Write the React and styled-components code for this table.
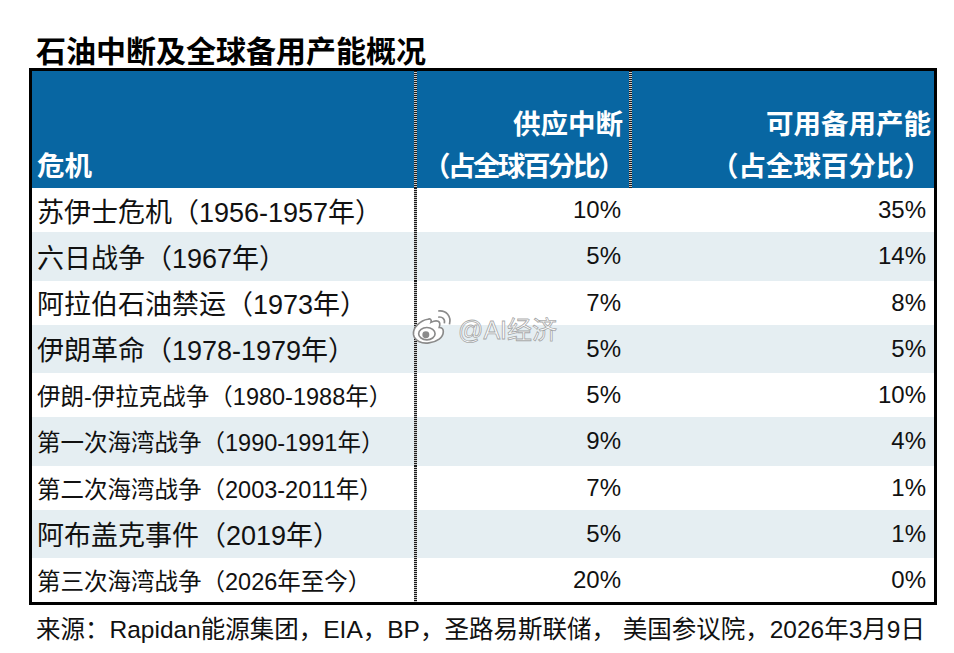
import React from "react";
import styled, { createGlobalStyle } from "styled-components";

const GlobalStyle = createGlobalStyle`
  html, body {
    margin: 0;
    padding: 0;
    background: #fff;
  }
  body {
    font-family: "Liberation Sans", "Noto Sans CJK SC", sans-serif;
    color: #111;
  }
`;

const FONT = `"Liberation Sans", "Noto Sans CJK SC", sans-serif`;

const dividerBg = `
  background-image: repeating-linear-gradient(
    to bottom,
    #1a1a1a 0 1px,
    #c8c8c8 1px 2px
  );
  background-size: 3px 100%;
  background-repeat: no-repeat;
  background-position: left top;
`;

const Page = styled.div`
  position: relative;
  width: 954px;
  height: 653px;
  padding: 31px 0 0 29px;
  box-sizing: border-box;
`;

const Title = styled.h1`
  margin: 0 0 0 7px;
  height: 37px;
  font-family: "Noto Sans CJK SC", sans-serif;
  font-size: 30px;
  font-weight: 700;
  line-height: 37px;
  color: #000;
`;

const Table = styled.div`
  width: 908px;
  border: 3px solid #000;
  box-sizing: border-box;
  display: grid;
  grid-template-columns: 382px 215px 1fr;
`;

const HeadCell = styled.div`
  height: 117px;
  background-color: #0866a2;
  color: #fff;
  font-family: "Noto Sans CJK SC", sans-serif;
  font-weight: 700;
  font-size: 27.5px;
  line-height: 42px;
  display: flex;
  flex-direction: column;
  justify-content: flex-end;
  align-items: ${(p) => (p.$right ? "flex-end" : "flex-start")};
  padding: 0 ${(p) => (p.$right ? p.$pr : 0)}px 3px ${(p) => (p.$right ? 0 : 5)}px;
  box-sizing: border-box;
  white-space: nowrap;
  ${(p) => p.$divider && dividerBg}
`;

const HeadSub = styled.span`
  letter-spacing: ${(p) => p.$tight || 0}px;
`;

const Cell = styled.div`
  height: ${(p) => p.$h}px;
  background-color: ${(p) => (p.$shade ? "#e5eef2" : "#fff")};
  display: flex;
  align-items: center;
  justify-content: ${(p) => (p.$right ? "flex-end" : "flex-start")};
  padding: ${(p) => (p.$right ? `0 ${p.$pr}px 0 0` : "0 0 0 5px")};
  box-sizing: border-box;
  font-family: ${FONT};
  font-size: ${(p) => p.$size}px;
  color: #111;
  white-space: nowrap;
  ${(p) => p.$divider && dividerBg}
`;

const Footer = styled.div`
  margin: 9px 0 0 7px;
  font-family: ${FONT};
  font-size: 24.5px;
  line-height: 32px;
  color: #111;
  white-space: nowrap;
`;

const Watermark = styled.div`
  position: absolute;
  left: 410px;
  top: 309px;
  display: flex;
  align-items: center;
  gap: 4px;
  font-family: ${FONT};
  font-size: 25px;
  color: rgba(255, 255, 255, 0.9);
  -webkit-text-stroke: 0.8px rgba(130, 130, 130, 0.7);
  pointer-events: none;
`;

const WeiboLogo = () => (
  <svg width="44" height="37" viewBox="0 0 42 36">
    <g fill="#fff" stroke="#8a8a8a" strokeWidth="1.6">
      <path d="M17 10c-7 1-15 8-14 15 1 6 8 9 15 8 8-1 14-5 14-11 0-3-2-4-4-4 1-3 1-5-1-6-2-1-5 0-7 1 1-3-1-4-3-3z" />
      <ellipse cx="16" cy="24" rx="8" ry="6" />
      <circle cx="15" cy="25" r="2.6" fill="#8a8a8a" />
      <path d="M27 8c4-1 7 2 6 6" fill="none" />
      <path d="M27 2c8-1 13 5 11 13" fill="none" />
    </g>
  </svg>
);

const rows = [
  { name: "苏伊士危机（1956-1957年）", a: "10%", b: "35%", size: 27 },
  { name: "六日战争（1967年）", a: "5%", b: "14%", size: 27 },
  { name: "阿拉伯石油禁运（1973年）", a: "7%", b: "8%", size: 27 },
  { name: "伊朗革命（1978-1979年）", a: "5%", b: "5%", size: 27 },
  { name: "伊朗-伊拉克战争（1980-1988年）", a: "5%", b: "10%", size: 23.5 },
  { name: "第一次海湾战争（1990-1991年）", a: "9%", b: "4%", size: 23.5 },
  { name: "第二次海湾战争（2003-2011年）", a: "7%", b: "1%", size: 23.5 },
  { name: "阿布盖克事件（2019年）", a: "5%", b: "1%", size: 27 },
  { name: "第三次海湾战争（2026年至今）", a: "20%", b: "0%", size: 23.5 },
];

const App = () => {
  return (
    <>
      <GlobalStyle />
      <Page>
        <Title>石油中断及全球备用产能概况</Title>
        <Table>
          <HeadCell>危机</HeadCell>
          <HeadCell $right $pr={6} $divider>
            <span>供应中断</span>
            <HeadSub $tight={-2.5}>（占全球百分比）</HeadSub>
          </HeadCell>
          <HeadCell $right $pr={3} $divider>
            <span>可用备用产能</span>
            <HeadSub>（占全球百分比）</HeadSub>
          </HeadCell>
          {rows.map((r, i) => {
            const shade = i % 2 === 1;
            const h = shade ? 48.5 : 44;
            return (
              <React.Fragment key={r.name}>
                <Cell $h={h} $shade={shade} $size={r.size}>
                  {r.name}
                </Cell>
                <Cell $h={h} $shade={shade} $size={24} $right $pr={8} $divider>
                  {r.a}
                </Cell>
                <Cell $h={h} $shade={shade} $size={24} $right $pr={8}>
                  {r.b}
                </Cell>
              </React.Fragment>
            );
          })}
        </Table>
        <Footer>来源：Rapidan能源集团，EIA，BP，圣路易斯联储， 美国参议院，2026年3月9日</Footer>
        <Watermark>
          <WeiboLogo />
          <span>@AI经济</span>
        </Watermark>
      </Page>
    </>
  );
};

export default App;
